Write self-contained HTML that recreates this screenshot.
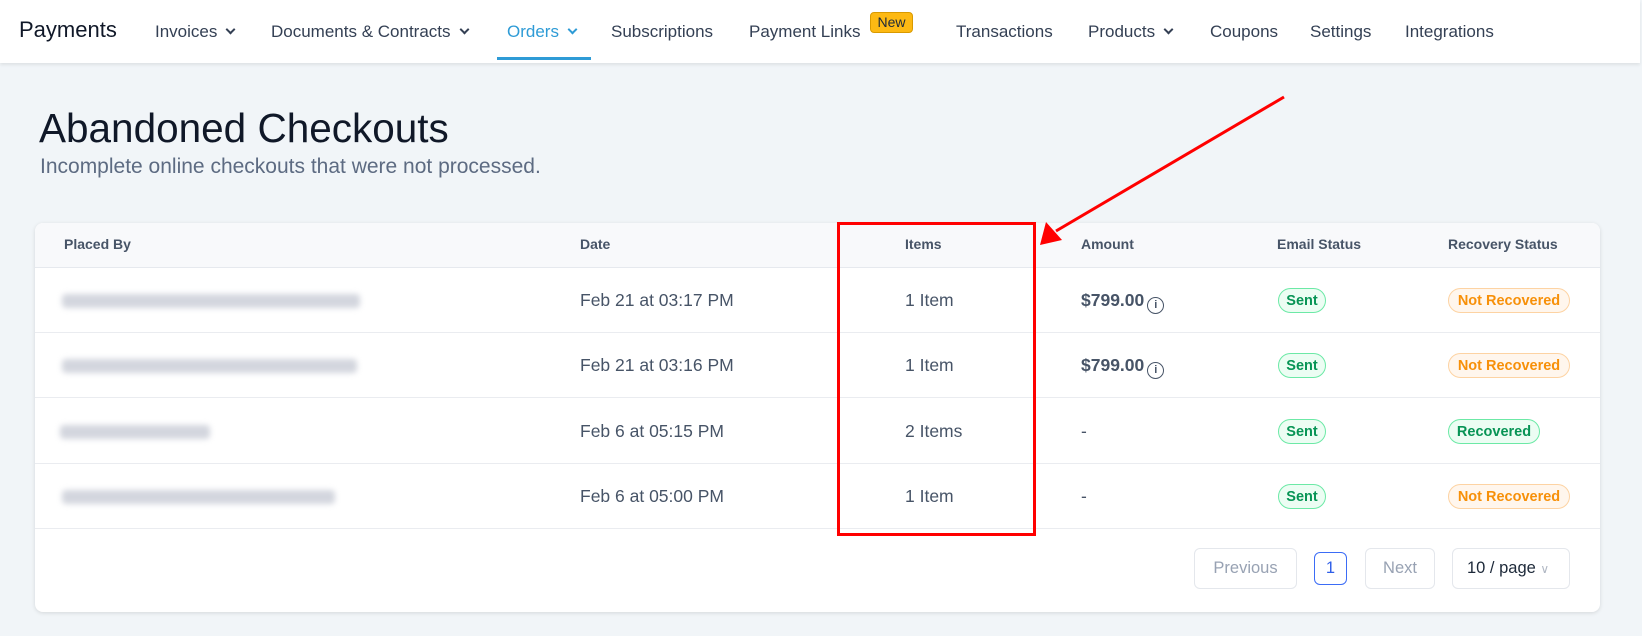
<!DOCTYPE html>
<html><head><style>
*{box-sizing:border-box;margin:0;padding:0}
body{width:1642px;height:636px;background:#f1f5f8;font-family:"Liberation Sans",sans-serif;position:relative;overflow:hidden;color:#344054}
.nav{position:absolute;left:0;top:0;width:1640px;height:63px;background:#fff;box-shadow:0 2px 3px rgba(0,0,0,.08)}
.n{position:absolute;top:22px;font-size:17px;color:#344054;white-space:nowrap}
.chev{display:inline-block;width:7px;height:7px;border-right:2px solid #344054;border-bottom:2px solid #344054;transform:rotate(45deg);margin-left:10px;position:relative;top:-4px}
.ab{position:absolute;white-space:nowrap}
.card{position:absolute;left:35px;top:223px;width:1565px;height:389px;background:#fff;border-radius:8px;box-shadow:0 1px 4px rgba(0,0,0,.12);overflow:hidden}
.hdr{position:absolute;left:0;top:0;width:100%;height:45px;background:#f8f9fb;border-bottom:1px solid #e6e9ee}
.th{position:absolute;top:13px;font-size:14px;font-weight:bold;color:#475467}
.row{position:absolute;left:0;width:100%;height:65px;border-bottom:1px solid #eaecf0}
.td{position:absolute;top:22px;font-size:17.5px;color:#475467;white-space:nowrap}
.blur{position:absolute;top:26px;height:14px;background:#d3d6de;filter:blur(3px);border-radius:4px}
.b{position:absolute;top:20px;height:25px;border-radius:13px;font-size:14.5px;font-weight:bold;line-height:24px;text-align:center}
.g{background:#ecfdf3;border:1px solid #6ce9a6;color:#079455}
.o{background:#fff6ed;border:1px solid #fdd3a3;color:#f79009}
.btn{position:absolute;top:325px;height:41px;border:1px solid #e4e7ec;border-radius:6px;font-size:16.5px;color:#98a2b3;text-align:center;line-height:39px;background:#fff}
.i{display:inline-block;width:17px;height:17px;border:1.5px solid #475467;border-radius:50%;font-size:11px;text-align:center;line-height:14px;vertical-align:-2px;margin-left:3px}
</style></head><body>
<div class="nav">
<div class="n" style="left:19px;top:17px;font-size:22px;color:#101828">Payments</div>
<div class="n" style="left:155px">Invoices<span class="chev"></span></div>
<div class="n" style="left:271px">Documents &amp; Contracts<span class="chev"></span></div>
<div class="n" style="left:507px;color:#2e9bd6">Orders<span class="chev" style="border-color:#2e9bd6"></span></div>
<div style="position:absolute;left:497px;top:57px;width:94px;height:3px;background:#2e9bd6"></div>
<div class="n" style="left:611px">Subscriptions</div>
<div class="n" style="left:749px">Payment Links</div>
<div class="ab" style="left:870px;top:12px;width:43px;height:21px;background:#fdb913;border:1px solid #d99a00;border-radius:4px;font-size:14px;color:#1d2939;text-align:center;line-height:19px">New</div>
<div class="n" style="left:956px">Transactions</div>
<div class="n" style="left:1088px">Products<span class="chev"></span></div>
<div class="n" style="left:1210px">Coupons</div>
<div class="n" style="left:1310px">Settings</div>
<div class="n" style="left:1405px">Integrations</div>
</div>
<div class="ab" style="left:39px;top:105px;font-size:40.5px;color:#101828">Abandoned Checkouts</div>
<div class="ab" style="left:40px;top:155px;font-size:21px;color:#5d6b82">Incomplete online checkouts that were not processed.</div>
<div class="card">
<div class="hdr">
<div class="th" style="left:29px">Placed By</div>
<div class="th" style="left:545px">Date</div>
<div class="th" style="left:870px">Items</div>
<div class="th" style="left:1046px">Amount</div>
<div class="th" style="left:1242px">Email Status</div>
<div class="th" style="left:1413px">Recovery Status</div>
</div>
<div class="row" style="top:45px">
<div class="blur" style="left:27px;width:298px"></div>
<div class="td" style="left:545px">Feb 21 at 03:17 PM</div>
<div class="td" style="left:870px">1 Item</div>
<div class="td" style="left:1046px;font-weight:bold">$799.00<span class="i">i</span></div>
<div class="b g" style="left:1243px;width:48px">Sent</div>
<div class="b o" style="left:1413px;width:122px">Not Recovered</div>
</div>
<div class="row" style="top:110px">
<div class="blur" style="left:27px;width:295px"></div>
<div class="td" style="left:545px">Feb 21 at 03:16 PM</div>
<div class="td" style="left:870px">1 Item</div>
<div class="td" style="left:1046px;font-weight:bold">$799.00<span class="i">i</span></div>
<div class="b g" style="left:1243px;width:48px">Sent</div>
<div class="b o" style="left:1413px;width:122px">Not Recovered</div>
</div>
<div class="row" style="top:176px">
<div class="blur" style="left:25px;width:150px"></div>
<div class="td" style="left:545px">Feb 6 at 05:15 PM</div>
<div class="td" style="left:870px">2 Items</div>
<div class="td" style="left:1046px">-</div>
<div class="b g" style="left:1243px;width:48px">Sent</div>
<div class="b g" style="left:1413px;width:92px">Recovered</div>
</div>
<div class="row" style="top:241px">
<div class="blur" style="left:27px;width:273px"></div>
<div class="td" style="left:545px">Feb 6 at 05:00 PM</div>
<div class="td" style="left:870px">1 Item</div>
<div class="td" style="left:1046px">-</div>
<div class="b g" style="left:1243px;width:48px">Sent</div>
<div class="b o" style="left:1413px;width:122px">Not Recovered</div>
</div>
<div class="btn" style="left:1159px;width:103px">Previous</div>
<div class="btn" style="left:1279px;top:329px;width:33px;height:33px;line-height:31px;border-color:#3b6cf6;color:#2f5fe8">1</div>
<div class="btn" style="left:1330px;width:70px">Next</div>
<div class="btn" style="left:1417px;width:118px;color:#1d2939;text-align:left;padding-left:14px">10 / page <span style="color:#b0b7c3;font-size:12px">&#8744;</span></div>
</div>
<div style="position:absolute;left:837px;top:222px;width:199px;height:314px;border:3px solid #f00"></div>
<svg style="position:absolute;left:0;top:0" width="1642" height="636">
<line x1="1284" y1="97" x2="1056" y2="231" stroke="#f00" stroke-width="3"/>
<polygon points="1040,245 1046,222 1062,240" fill="#f00"/>
</svg>
</body></html>
